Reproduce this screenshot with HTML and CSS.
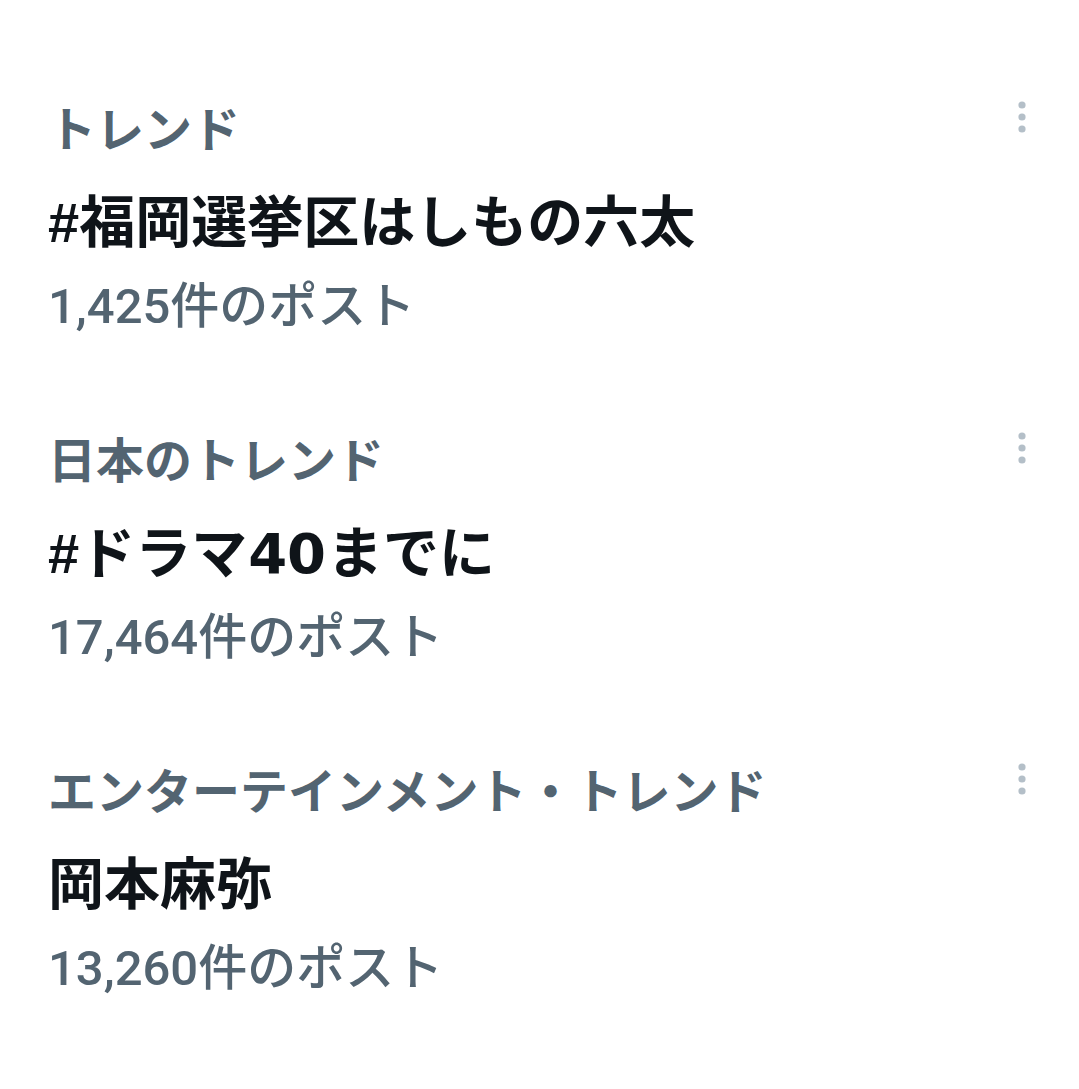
FILE: index.html
```html
<!DOCTYPE html>
<html lang="ja">
<head>
    <meta charset="UTF-8">
    <meta name="viewport" content="width=device-width, initial-scale=1.0">
    <link rel="stylesheet" href="styles.css">
    <title>トレンド</title>
</head>
<body>
    <div class="trend-list">
        <!-- Trend 1 -->
        <div class="trend-item">
            <div class="trend-text">
                <div class="trend-label">トレンド</div>
                <div class="trend-title">#福岡選挙区はしもの六太</div>
                <div class="trend-count">1,425件のポスト</div>
            </div>
            <svg class="more-icon" width="10" height="36" viewBox="0 0 10 36">
                <circle cx="5" cy="4" r="3.6"/>
                <circle cx="5" cy="16" r="3.6"/>
                <circle cx="5" cy="28" r="3.6"/>
            </svg>
        </div>

        <!-- Trend 2 -->
        <div class="trend-item">
            <div class="trend-text">
                <div class="trend-label">日本のトレンド</div>
                <div class="trend-title">#ドラマ<span class="num">40</span>までに</div>
                <div class="trend-count">17,464件のポスト</div>
            </div>
            <svg class="more-icon" width="10" height="36" viewBox="0 0 10 36">
                <circle cx="5" cy="4" r="3.6"/>
                <circle cx="5" cy="16" r="3.6"/>
                <circle cx="5" cy="28" r="3.6"/>
            </svg>
        </div>

        <!-- Trend 3 -->
        <div class="trend-item">
            <div class="trend-text">
                <div class="trend-label">エンターテインメント・トレンド</div>
                <div class="trend-title">岡本麻弥</div>
                <div class="trend-count">13,260件のポスト</div>
            </div>
            <svg class="more-icon" width="10" height="36" viewBox="0 0 10 36">
                <circle cx="5" cy="4" r="3.6"/>
                <circle cx="5" cy="16" r="3.6"/>
                <circle cx="5" cy="28" r="3.6"/>
            </svg>
        </div>
    </div>
</body>
</html>
```

FILE: styles.css
```css
/* Page base */
body, html {
    margin: 0;
    background-color: #ffffff;
    font-family: "Liberation Sans", "Noto Sans CJK JP", sans-serif;
}

.trend-list {
    display: flex;
    flex-direction: column;
    padding: 83px 52px 0 48px;
}

/* One trend row */
.trend-item {
    display: flex;
    justify-content: space-between;
    align-items: flex-start;
    padding-bottom: 67px;
}

.trend-label {
    font-size: 48px;
    line-height: 96px;
    font-weight: 700;
    color: #536471;
}

.trend-title {
    font-size: 56px;
    line-height: 88px;
    font-weight: 700;
    color: #0f1419;
}

/* wider digits inside titles */
.trend-title .num {
    font-family: "DejaVu Sans", sans-serif;
    margin: 0 1px;
}

.trend-count {
    font-family: Roboto, "Noto Sans CJK JP", sans-serif;
    font-size: 49px;
    line-height: 80px;
    font-weight: 500;
    color: #536471;
}

/* Three-dot menu */
.more-icon {
    margin-top: 18px;
    fill: #b4bfc8;
}
```
